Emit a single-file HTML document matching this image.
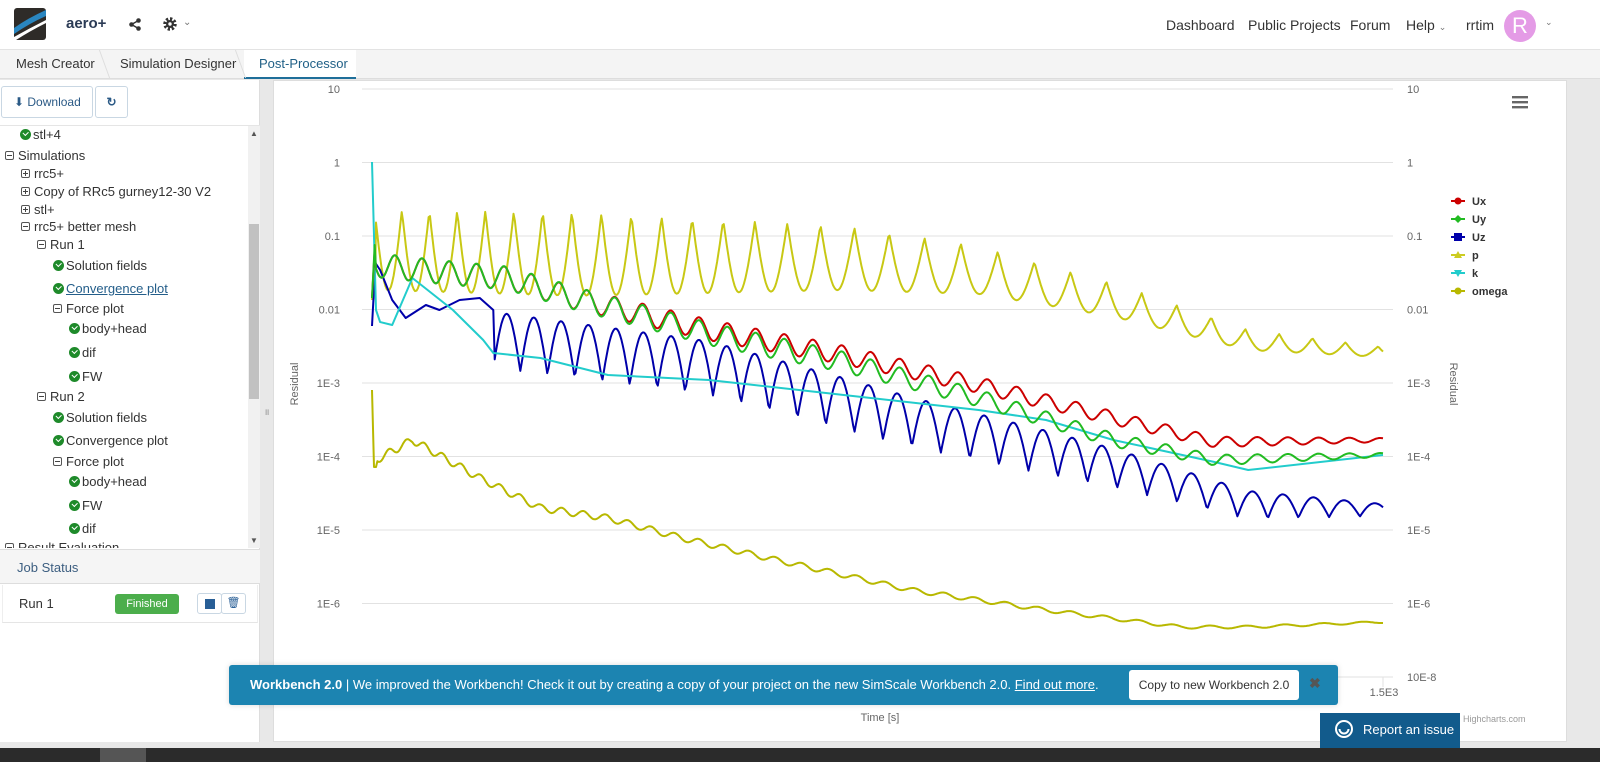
<!DOCTYPE html>
<html><head><meta charset="utf-8">
<style>
*{box-sizing:border-box;margin:0;padding:0}
body{width:1600px;height:762px;overflow:hidden;background:#e8e8e8;font-family:"Liberation Sans",sans-serif;position:relative;color:#333}
.nav{position:absolute;left:0;top:0;width:1600px;height:50px;background:#fff;border-bottom:1px solid #e3e3e3}
.nav .r{position:absolute;top:17px;font-size:14px;color:#333}
.tabs{position:absolute;left:0;top:50px;width:1600px;height:29px;background:#f4f4f4;border-bottom:1px solid #ddd}
.tab{position:absolute;top:6px;font-size:13px;color:#333}
.left{position:absolute;left:0;top:80px;width:260px;height:662px;background:#fff;border-right:1px solid #ddd}
.btn{position:absolute;top:6px;height:32px;border:1px solid #c9d7e3;border-radius:3px;background:#fff;font-size:12px;color:#2b5a86;line-height:30px}
.tree{position:absolute;left:0;top:45px;width:260px;height:423px;overflow:hidden;border-top:1px solid #e5e5e5}
.it{position:absolute;font-size:13px;color:#333;white-space:nowrap}
.ck{display:inline-block;width:11px;height:11px;border-radius:50%;background:#1e8a2a;vertical-align:-1px;margin-right:2px;position:relative}
.ck:after{content:"";position:absolute;left:3px;top:2px;width:4px;height:2.5px;border-left:1.6px solid #fff;border-bottom:1.6px solid #fff;transform:rotate(-45deg)}
.bx{display:inline-block;width:9px;height:9px;border:1px solid #555;border-radius:2px;vertical-align:0;margin-right:4px;position:relative}
.bx:before{content:"";position:absolute;left:1px;top:3px;width:5px;height:1px;background:#444}
.bx.p:after{content:"";position:absolute;left:3px;top:1px;width:1px;height:5px;background:#444}
.chart{position:absolute;left:273px;top:80px;width:1294px;height:662px;background:#fff;border:1px solid #ddd}
</style></head><body>
<div class="nav">
 <svg style="position:absolute;left:14px;top:8px" width="32" height="32" viewBox="0 0 32 32"><rect width="32" height="32" rx="3" fill="#2e2b28"/><path d="M0 20 Q14 10 32 2 L32 8 Q16 15 0 26Z" fill="#2a86c0"/><path d="M0 29 Q16 20 32 12 L32 15 Q16 23 2 32 L0 32Z" fill="#fff"/></svg>
 <div style="position:absolute;left:66px;top:15px;font-size:15px;font-weight:bold;color:#2b3b55">aero+</div>
 <svg style="position:absolute;left:129px;top:18px" width="12" height="13" viewBox="0 0 12 13"><circle cx="9.5" cy="2.5" r="2.3" fill="#333"/><circle cx="2.5" cy="6.5" r="2.3" fill="#333"/><circle cx="9.5" cy="10.5" r="2.3" fill="#333"/><path d="M9.5 2.5L2.5 6.5L9.5 10.5" stroke="#333" stroke-width="1.5" fill="none"/></svg>
 <svg style="position:absolute;left:163px;top:17px" width="14" height="14" viewBox="0 0 14 14"><circle cx="7" cy="7" r="5" fill="none" stroke="#333" stroke-width="3.5" stroke-dasharray="2.2 1.7"/><circle cx="7" cy="7" r="4" fill="#333"/><circle cx="7" cy="7" r="1.7" fill="#fff"/></svg>
 <div style="position:absolute;left:183px;top:17px;font-size:10px;color:#777">⌄</div>
 <div class="r" style="left:1166px">Dashboard</div>
 <div class="r" style="left:1248px">Public Projects</div>
 <div class="r" style="left:1350px">Forum</div>
 <div class="r" style="left:1406px">Help <span style="font-size:9px;color:#777">⌄</span></div>
 <div class="r" style="left:1466px">rrtim</div>
 <div style="position:absolute;left:1504px;top:10px;width:32px;height:32px;border-radius:50%;background:#e49be6;color:#fff;font-size:22px;text-align:center;line-height:32px">R</div>
 <div style="position:absolute;left:1545px;top:17px;font-size:9px;color:#777">⌄</div>
</div>
<div class="tabs">
 <div class="tab" style="left:16px">Mesh Creator</div>
 <div class="tab" style="left:120px">Simulation Designer</div>
 <div style="position:absolute;left:244px;top:0;width:112px;height:29px;background:#fff;border-bottom:2px solid #1f6f9a"></div>
 <div class="tab" style="left:259px;color:#1f5f86">Post-Processor</div>
 <div style="position:absolute;left:104px;top:0;width:1px;height:28px;background:#ddd;transform:skewX(20deg)"></div>
 <div style="position:absolute;left:240px;top:0;width:1px;height:28px;background:#ddd;transform:skewX(20deg)"></div>
</div>
<div class="left">
 <div class="btn" style="left:1px;width:92px;padding-left:12px">⬇ Download</div>
 <div class="btn" style="left:95px;width:33px;text-align:center;font-weight:bold">↻</div>
 <div class="tree">
  <div class="it" style="left:20px;top:1px"><span class="ck"></span>stl+4</div>
  <div class="it" style="left:5px;top:22px"><span class="bx"></span>Simulations</div>
  <div class="it" style="left:21px;top:40px"><span class="bx p"></span>rrc5+</div>
  <div class="it" style="left:21px;top:58px"><span class="bx p"></span>Copy of RRc5 gurney12-30 V2</div>
  <div class="it" style="left:21px;top:76px"><span class="bx p"></span>stl+</div>
  <div class="it" style="left:21px;top:93px"><span class="bx"></span>rrc5+ better mesh</div>
  <div class="it" style="left:37px;top:111px"><span class="bx"></span>Run 1</div>
  <div class="it" style="left:53px;top:132px"><span class="ck"></span>Solution fields</div>
  <div class="it" style="left:53px;top:155px;color:#245e8a;text-decoration:underline"><span class="ck"></span>Convergence plot</div>
  <div class="it" style="left:53px;top:175px"><span class="bx"></span>Force plot</div>
  <div class="it" style="left:69px;top:195px"><span class="ck"></span>body+head</div>
  <div class="it" style="left:69px;top:219px"><span class="ck"></span>dif</div>
  <div class="it" style="left:69px;top:243px"><span class="ck"></span>FW</div>
  <div class="it" style="left:37px;top:263px"><span class="bx"></span>Run 2</div>
  <div class="it" style="left:53px;top:284px"><span class="ck"></span>Solution fields</div>
  <div class="it" style="left:53px;top:307px"><span class="ck"></span>Convergence plot</div>
  <div class="it" style="left:53px;top:328px"><span class="bx"></span>Force plot</div>
  <div class="it" style="left:69px;top:348px"><span class="ck"></span>body+head</div>
  <div class="it" style="left:69px;top:372px"><span class="ck"></span>FW</div>
  <div class="it" style="left:69px;top:395px"><span class="ck"></span>dif</div>
  <div class="it" style="left:5px;top:414px"><span class="bx"></span>Result Evaluation</div>
  <div style="position:absolute;left:248px;top:0;width:12px;height:423px;background:#f1f1f1"></div>
  <div style="position:absolute;left:249px;top:98px;width:10px;height:175px;background:#c1c1c1"></div>
  <div style="position:absolute;left:250px;top:3px;font-size:8px;color:#555">▲</div>
  <div style="position:absolute;left:250px;top:410px;font-size:8px;color:#555">▼</div>
 </div>
 <div style="position:absolute;left:0;top:469px;width:260px;height:35px;background:#f5f5f5;border-top:1px solid #ddd;border-bottom:1px solid #ddd;font-size:13px;color:#3c5e80;padding:10px 17px">Job Status</div>
 <div style="position:absolute;left:2px;top:505px;width:256px;height:38px;border-bottom:1px solid #e5e5e5;border-left:1px solid #eee;border-right:1px solid #eee">
  <div style="position:absolute;left:16px;top:11px;font-size:13px">Run 1</div>
  <div style="position:absolute;left:112px;top:9px;width:64px;height:20px;border-radius:3px;background:#4cae4c;color:#fff;font-size:11px;text-align:center;line-height:20px">Finished</div>
  <div style="position:absolute;left:194px;top:8px;width:25px;height:21px;border:1px solid #c9d7e3;border-radius:3px"><div style="margin:5px auto;width:10px;height:10px;background:#285e96"></div></div>
  <div style="position:absolute;left:218px;top:8px;width:25px;height:21px;border:1px solid #c9d7e3;border-radius:3px;text-align:center;font-size:11px;color:#285e96;line-height:19px">🗑</div>
 </div>
</div>
<div style="position:absolute;left:264px;top:405px;font-size:9px;color:#888">॥</div>
<div class="chart"></div>
<svg style="position:absolute;left:0;top:0" width="1600" height="762" id="ch">
 <g stroke="#e2e2e2" stroke-width="1" id="grid"></g>
 <g font-family="Liberation Sans" font-size="11" fill="#666" id="lab"></g>
 <text x="298" y="384" font-size="11" fill="#666" font-family="Liberation Sans" transform="rotate(-90 298 384)" text-anchor="middle">Residual</text>
 <text x="1450" y="384" font-size="11" fill="#666" font-family="Liberation Sans" transform="rotate(90 1450 384)" text-anchor="middle">Residual</text>
 <text x="880" y="721" font-size="11" fill="#666" font-family="Liberation Sans" text-anchor="middle">Time [s]</text>
 <text x="1463" y="722" font-size="9" fill="#999" font-family="Liberation Sans">Highcharts.com</text>
 <g fill="#666"><rect x="1512" y="96" width="16" height="2.4"/><rect x="1512" y="101" width="16" height="2.4"/><rect x="1512" y="106" width="16" height="2.4"/></g>
 <g id="lines" fill="none" stroke-width="2" stroke-linejoin="round"></g>
 <g font-family="Liberation Sans" font-size="11" font-weight="bold" fill="#333">
  <line x1="1451" y1="201" x2="1465" y2="201" stroke="#cc0000" stroke-width="2"/><circle cx="1458" cy="201" r="3.5" fill="#cc0000"/><text x="1472" y="205">Ux</text>
  <line x1="1451" y1="219" x2="1465" y2="219" stroke="#22bb22" stroke-width="2"/><path d="M1458 215l4 4-4 4-4-4z" fill="#22bb22"/><text x="1472" y="223">Uy</text>
  <line x1="1451" y1="237" x2="1465" y2="237" stroke="#0000aa" stroke-width="2"/><rect x="1454" y="233" width="8" height="8" fill="#0000aa"/><text x="1472" y="241">Uz</text>
  <line x1="1451" y1="255" x2="1465" y2="255" stroke="#cccc22" stroke-width="2"/><path d="M1458 251l4 7h-8z" fill="#cccc22"/><text x="1472" y="259">p</text>
  <line x1="1451" y1="273" x2="1465" y2="273" stroke="#22cccc" stroke-width="2"/><path d="M1454 270h8l-4 7z" fill="#22cccc"/><text x="1472" y="277">k</text>
  <line x1="1451" y1="291" x2="1465" y2="291" stroke="#b8b800" stroke-width="2"/><circle cx="1458" cy="291" r="3.5" fill="#b8b800"/><text x="1472" y="295">omega</text>
 </g>
</svg>
<div style="position:absolute;left:229px;top:665px;width:1109px;height:40px;background:#1c84b1;border-radius:3px;box-shadow:0 0 6px rgba(0,0,0,.15)">
 <div style="position:absolute;left:21px;top:12px;font-size:13px;color:#fff;white-space:nowrap"><b>Workbench 2.0</b> | We improved the Workbench! Check it out by creating a copy of your project on the new SimScale Workbench 2.0. <u>Find out more</u>.</div>
 <div style="position:absolute;left:900px;top:5px;width:170px;height:30px;background:#fff;border-radius:3px;font-size:12px;color:#333;text-align:center;line-height:30px">Copy to new Workbench 2.0</div>
 <div style="position:absolute;left:1080px;top:10px;font-size:14px;color:#555;font-weight:bold">✖</div>
</div>
<div style="position:absolute;left:1320px;top:713px;width:140px;height:35px;background:#125b8c;color:#fff;font-size:13px;line-height:33px;padding-left:43px">Report an issue</div>
<svg style="position:absolute;left:1334px;top:719px" width="20" height="20"><circle cx="10" cy="10" r="8" fill="none" stroke="#fff" stroke-width="2"/><path d="M5.5 10a4.5 4.5 0 0 0 9 0" fill="none" stroke="#fff" stroke-width="2"/></svg>
<div style="position:absolute;left:0;top:748px;width:1600px;height:14px;background:#2b2b2b"></div>
<div style="position:absolute;left:100px;top:748px;width:46px;height:14px;background:#555"></div>
<script>
(function(){
var ns="http://www.w3.org/2000/svg";
function el(p,t,a,txt){var e=document.createElementNS(ns,t);for(var k in a)e.setAttribute(k,a[k]);if(txt)e.textContent=txt;p.appendChild(e);}
var g=document.getElementById('grid'),lb=document.getElementById('lab');
var labs=["10","1","0.1","0.01","1E-3","1E-4","1E-5","1E-6","10E-8"];
for(var i=0;i<9;i++){var y=89+i*73.5;el(g,'line',{x1:362,x2:1393,y1:y,y2:y});
 el(lb,'text',{x:340,y:y+4,'text-anchor':'end'},labs[i]);el(lb,'text',{x:1407,y:y+4},labs[i]);}
el(g,'line',{x1:1383,x2:1383,y1:677,y2:687});
el(lb,'text',{x:1384,y:696,'text-anchor':'middle'},"1.5E3");
function X(t){return 372+t*0.674;}
function interp(k,t){for(var i=1;i<k.length;i++){if(t<=k[i][0]){var a=k[i-1],b=k[i];return a[1]+(b[1]-a[1])*(t-a[0])/(b[0]-a[0]);}}return k[k.length-1][1];}
function curve(col,pre,keys,amp,per,mode,t0){
 var d="M"+pre.map(function(p){return X(p[0]).toFixed(1)+" "+p[1];}).join(" L");
 var ph=0;
 for(var t=t0;t<=1500;t+=2){var P=interp(per,t);ph+=2/P;var A=interp(amp,t);var s=Math.abs(Math.sin(Math.PI*ph));var y=interp(keys,t);
  if(mode==1)y+=A*(1-2*s);else if(mode==2)y-=A*(1-2*s);else y+=A*Math.sin(2*Math.PI*ph);
  d+=" L"+X(t).toFixed(1)+" "+y.toFixed(1);}
 el(document.getElementById('lines'),'path',{d:d,stroke:col});
}
curve("#b8b800",[[0,390],[3,467],[6,467]],[[6,460],[60,440],[160,478],[250,508],[350,518],[460,538],[600,560],[800,590],[1000,610],[1200,627],[1300,627],[1500,622]],[[0,4],[1500,1]],[[0,25],[1500,60]],0,8);
curve("#c8c814",[[0,300],[5,262]],[[5,250],[400,255],[700,258],[900,270],[1100,300],[1300,340],[1500,352]],[[5,40],[300,42],[700,32],[1000,20],[1300,10],[1500,5]],[[0,40],[500,46],[900,55],[1500,48]],2,6);
curve("#0000aa",[[0,326],[5,263],[12,270],[30,300],[50,318],[80,305],[100,310],[130,300],[160,298],[180,310]],[[180,340],[500,368],[800,422],[1100,468],[1300,505],[1500,510]],[[180,28],[700,26],[1000,22],[1300,14],[1500,6]],[[180,40],[1500,46]],1,182);
curve("#22cccc",[[0,162],[6,310],[12,322],[30,325],[60,278],[120,310],[165,340],[180,353],[250,358],[350,375],[500,380],[700,395],[900,410],[1000,420],[1100,440],[1250,462],[1300,470],[1500,455]],[[0,0],[1500,0]],[[0,50],[1500,50]],0,1500);
curve("#cc0000",[[0,298],[4,250]],[[4,265],[100,272],[200,278],[300,298],[500,330],[700,355],[900,385],[1100,418],[1250,442],[1500,440]],[[4,12],[600,10],[1200,6],[1500,2]],[[0,40],[1500,46]],0,6);
curve("#22bb22",[[0,298],[4,245]],[[4,265],[100,272],[200,278],[300,298],[500,334],[700,362],[900,398],[1100,440],[1250,460],[1500,455]],[[4,12],[600,11],[1200,6],[1500,2]],[[0,40],[1500,46]],0,6);
})();
</script>
</body></html>
